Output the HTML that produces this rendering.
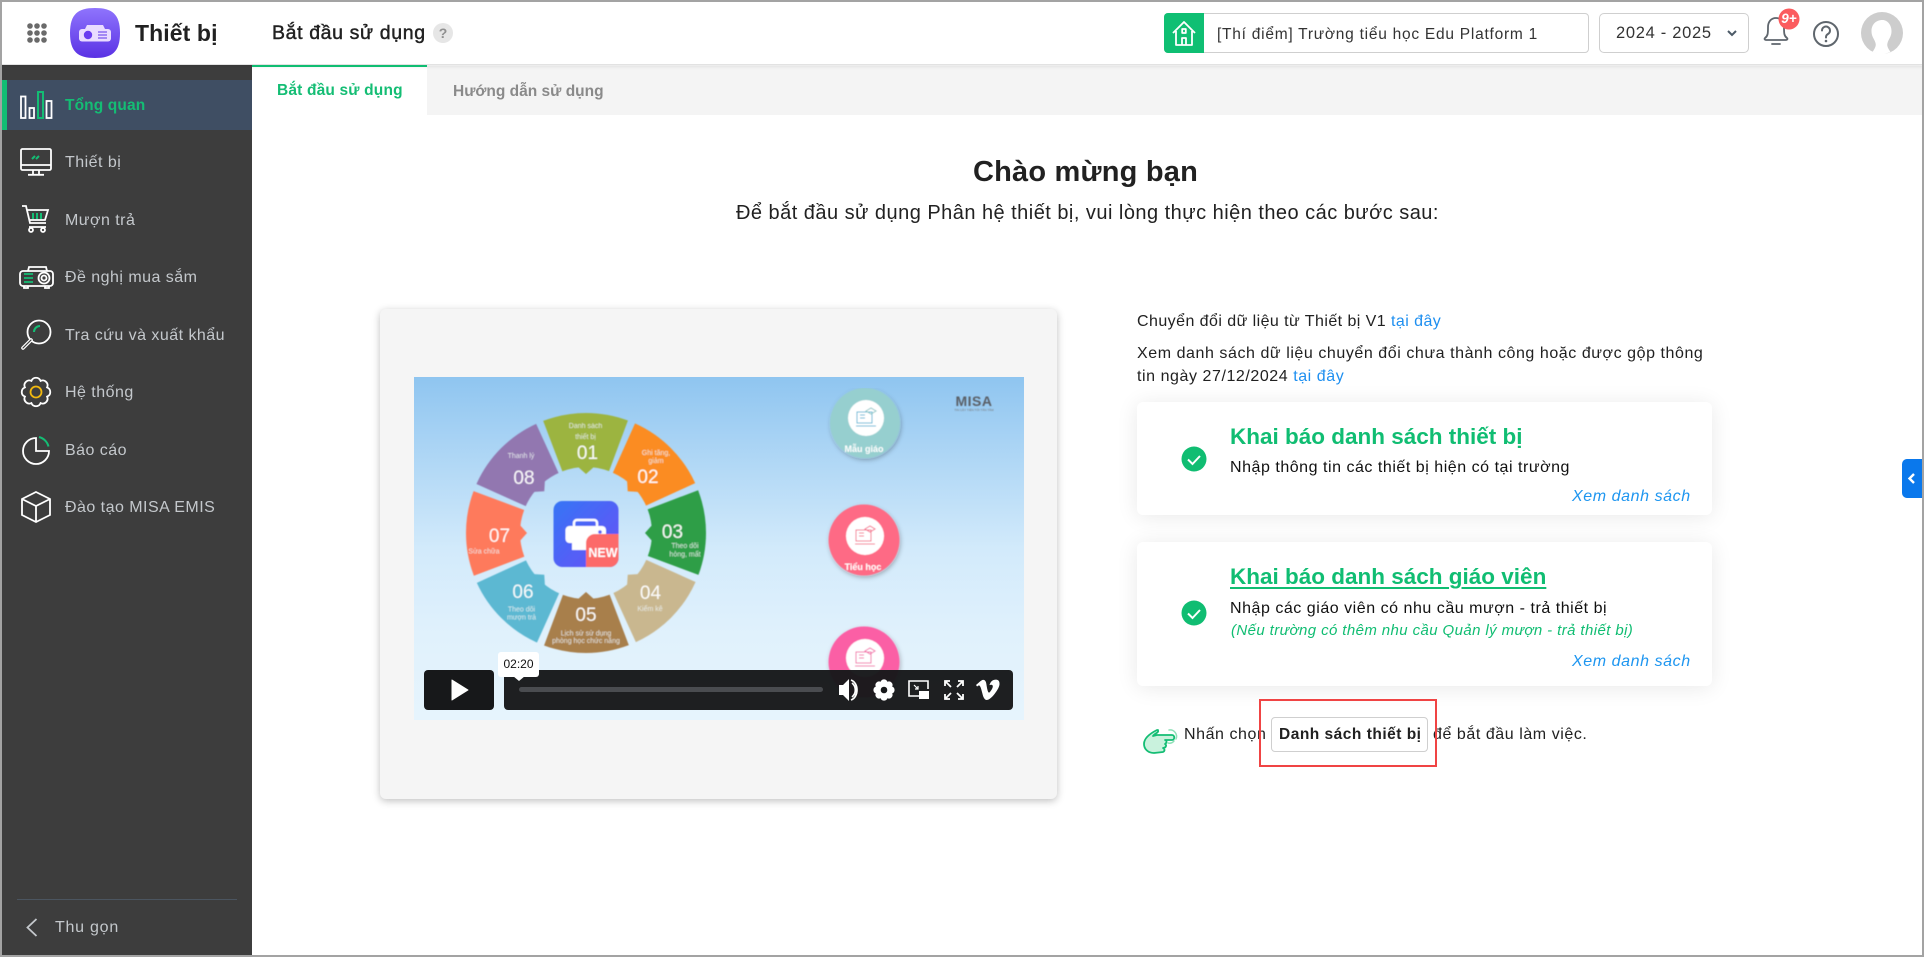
<!DOCTYPE html>
<html lang="vi">
<head>
<meta charset="utf-8">
<title>Thiết bị</title>
<style>
*{box-sizing:border-box}
html,body{margin:0;padding:0;width:1924px;height:957px;overflow:hidden;background:#fff}
body{font-family:"Liberation Sans","Noto Sans CJK SC",sans-serif;color:#212121;position:relative}
.a{position:absolute}
.t{position:absolute;white-space:nowrap;line-height:20px;height:20px}
svg{position:absolute;overflow:visible}
.m{left:65px;font-size:16px;color:#c4c8cc;letter-spacing:.47px}
.b{font-size:16px;color:#212121;letter-spacing:.56px}
.l{color:#1e8ff0}
.card{position:absolute;left:1137px;width:575px;background:#fff;border-radius:6px;box-shadow:0 2px 22px rgba(0,0,0,.09)}
.h{left:1230px;font-size:22.5px;font-weight:bold;color:#10bd72;line-height:28px;height:28px}
.x{left:1572px;font-size:16px;font-style:italic;color:#1e96f0;letter-spacing:.58px}
.d{left:1230px;font-size:16px;color:#111;letter-spacing:.53px}
</style>
</head>
<body>
<!-- header -->
<div class="a" style="left:0;top:0;width:1924px;height:65px;background:#fff;border-bottom:1px solid #e2e2e2;box-shadow:0 1px 4px rgba(0,0,0,.12);z-index:3"></div>
<svg style="left:0;top:0;z-index:4" width="1924" height="65">
  <g fill="#6a6a6a">
    <circle cx="30" cy="26" r="2.8"/><circle cx="37" cy="26" r="2.8"/><circle cx="44" cy="26" r="2.8"/>
    <circle cx="30" cy="33" r="2.8"/><circle cx="37" cy="33" r="2.8"/><circle cx="44" cy="33" r="2.8"/>
    <circle cx="30" cy="40" r="2.8"/><circle cx="37" cy="40" r="2.8"/><circle cx="44" cy="40" r="2.8"/>
  </g>
  <defs><linearGradient id="lg" x1="0" y1="0" x2="0" y2="1"><stop offset="0" stop-color="#8f74fd"/><stop offset="1" stop-color="#5a32e4"/></linearGradient>
  <linearGradient id="vbg" x1="0" y1="0" x2="0" y2="1"><stop offset="0" stop-color="#8fc5f0"/><stop offset=".5" stop-color="#d2eafb"/><stop offset=".75" stop-color="#e0f1fc"/><stop offset="1" stop-color="#e6f4fd"/></linearGradient>
  <linearGradient id="ic" x1="0" y1="0" x2="1" y2="1"><stop offset="0" stop-color="#3675f5"/><stop offset="1" stop-color="#6a4ff7"/></linearGradient>
  <filter id="sh" x="-30%" y="-30%" width="160%" height="160%"><feDropShadow dx="1" dy="2" stdDeviation="2.5" flood-color="#000" flood-opacity=".28"/></filter>
  <filter id="soft" x="0" y="0" width="100%" height="100%"><feGaussianBlur stdDeviation=".45"/></filter></defs>
  <path d="M95 8C112 8 120 14 120 33C120 52 112 58 95 58C78 58 70 52 70 33C70 14 78 8 95 8Z" fill="url(#lg)"/>
  <path d="M85 29l2-4h16l2 4Z" fill="#e9dcff"/>
  <rect x="79" y="29" width="32" height="12.500" rx="3" fill="#e9dcff"/>
  <circle cx="88" cy="35" r="4.200" fill="#6a3df0"/>
  <path d="M98 32h9M98 35h9M98 38h9" stroke="#7a55ee" stroke-width="1.300"/>
  <circle cx="443" cy="33" r="10" fill="#e6e6e6"/>
  <!-- bell -->
  <g fill="none" stroke="#5f666d" stroke-width="1.800" stroke-linecap="round" stroke-linejoin="round">
    <path d="M1765 38c3-2 3-5 3-11 0-5 3-9 8-9s8 4 8 9c0 6 0 9 3 11 1 1 0 2-1 2h-20c-1 0-2-1-1-2Z"/>
    <path d="M1772 44h8"/>
  </g>
  <circle cx="1789" cy="19" r="10.500" fill="#fb5c5f"/>
  <circle cx="1826" cy="34" r="12" fill="none" stroke="#5f666d" stroke-width="2"/>
  <path d="M1822 30.500a4 4 0 1 1 6 3.500c-1.500 1-2 1.500-2 3.500" fill="none" stroke="#5f666d" stroke-width="2" stroke-linecap="round"/>
  <circle cx="1826" cy="41" r="1.300" fill="#5f666d"/>
  <!-- avatar -->
  <circle cx="1882" cy="33" r="21" fill="#cdcdcd"/>
  <path d="M1882.500 20c-7 0-11 5-11 11 0 6 3 8 4 12 1 3-1 6-3 9l9 3 9-3c-2-3-4-6-3-9 1-4 4-6 4-12 0-6-4-11-9-11Z" fill="#fff"/>
  <!-- chevron -->
  <path d="M1728 31l4 4 4-4" fill="none" stroke="#4c5a67" stroke-width="2"/>
</svg>
<div class="t" style="left:135px;top:21px;font-size:23px;line-height:24px;height:24px;font-weight:bold;color:#212121;z-index:5;letter-spacing:.1px">Thiết bị</div>
<div class="t" style="left:272px;top:22px;font-size:19.5px;line-height:22px;height:22px;color:#212121;z-index:5;letter-spacing:.63px;-webkit-text-stroke:.45px #212121">Bắt đầu sử dụng</div>
<div class="t" style="left:437px;top:23px;width:12px;text-align:center;font-size:14px;font-weight:bold;color:#8f8f8f;z-index:5">?</div>
<div class="a" style="left:1164px;top:13px;width:425px;height:40px;border:1px solid #cfcfcf;border-radius:4px;background:#fff;z-index:5"></div>
<div class="a" style="left:1164px;top:13px;width:40px;height:40px;background:#0fbf73;border-radius:4px 0 0 4px;z-index:5"></div>
<svg style="left:1164px;top:13px;z-index:6" width="40" height="40" fill="none" stroke="#fff" stroke-width="1.800" stroke-linejoin="round">
  <path d="M9 20L20 9l11 11M12 18v14h16V18M18 32v-7h4v7"/><rect x="18.200" y="16" width="3.600" height="4"/>
</svg>
<div class="t" style="left:1217px;top:25px;font-size:15.5px;color:#333;z-index:6;letter-spacing:.75px">[Thí điểm] Trường tiểu học Edu Platform 1</div>
<div class="a" style="left:1599px;top:13px;width:150px;height:40px;border:1px solid #cfcfcf;border-radius:5px;background:transparent;z-index:5"></div>
<div class="t" style="left:1616px;top:23px;font-size:16.5px;color:#333;z-index:6;letter-spacing:.7px">2024 - 2025</div>
<div class="t" style="left:1780px;top:9px;width:18px;text-align:center;font-size:13.5px;font-weight:bold;font-style:italic;color:#fff;z-index:6">9+</div>

<!-- sidebar -->
<div class="a" style="left:0;top:65px;width:252px;height:892px;background:#3d3d3d"></div>
<div class="a" style="left:2px;top:80px;width:250px;height:50px;background:#3f4e63"></div>
<div class="a" style="left:2px;top:80px;width:5px;height:50px;background:#12bd74"></div>
<div class="t m" style="top:96px;color:#14bd74;font-weight:bold;font-size:15.5px;letter-spacing:.12px">Tổng quan</div>
<div class="t m" style="top:153px">Thiết bị</div>
<div class="t m" style="top:211px">Mượn trả</div>
<div class="t m" style="top:268px">Đề nghị mua sắm</div>
<div class="t m" style="top:326px">Tra cứu và xuất khẩu</div>
<div class="t m" style="top:383px">Hệ thống</div>
<div class="t m" style="top:441px">Báo cáo</div>
<div class="t m" style="top:498px">Đào tạo MISA EMIS</div>
<div class="t m" style="left:55px;top:918px;letter-spacing:.75px">Thu gọn</div>
<div class="a" style="left:17px;top:899px;width:220px;height:1px;background:#4b5560"></div>
<svg style="left:0;top:0" width="252" height="957" fill="none" stroke="#fff" stroke-width="1.800">
  <!-- overview -->
  <rect x="21" y="96.500" width="4.500" height="21.500"/><rect x="29.500" y="108" width="4.500" height="10"/>
  <rect x="38" y="92" width="5" height="26" stroke="#14bd74" stroke-width="2"/><rect x="46.500" y="101" width="5" height="17"/>
  <!-- monitor -->
  <rect x="21" y="149" width="30" height="21" rx="1.500"/><path d="M21 165h30M33 170v4.500M39 170v4.500M28 174.800h16"/>
  <path d="M32 159l3-3M36 159l3-3" stroke="#14bd74" stroke-width="2"/>
  <!-- cart -->
  <path d="M22 206h4l4 17h16M27 210h21l-3 10H29.500M29 227h17"/><circle cx="31" cy="230" r="2"/><circle cx="43" cy="230" r="2"/>
  <path d="M33 213v6M37 213v6M41 213v6" stroke="#14bd74" stroke-width="2"/>
  <!-- projector -->
  <rect x="20" y="271" width="33" height="15" rx="3"/><path d="M28 271l1-4h17l1 4M24 286v2h4v-2M45 286v2h4v-2"/>
  <circle cx="44" cy="278" r="5.500"/><circle cx="44" cy="278" r="2.500"/>
  <path d="M24 274h9M24 278h9M24 282h9" stroke="#14bd74"/>
  <!-- search -->
  <circle cx="39" cy="332" r="11.500"/><path d="M31 340l-8 8" stroke-width="3.600" stroke-linecap="round"/><path d="M31 340l-8 8" stroke="#3d3d3d" stroke-width="1.200" stroke-linecap="round"/>
  <path d="M34 332a6 6 0 0 1 6-6" stroke="#14bd74" stroke-width="2"/>
  <!-- gear -->
  <path transform="translate(36 392)" d="M4.590-11.090A4.900 4.900 0 0 1 11.090-4.590A4.900 4.900 0 0 1 11.090 4.590A4.900 4.900 0 0 1 4.590 11.090A4.900 4.900 0 0 1-4.590 11.090A4.900 4.900 0 0 1-11.090 4.590A4.900 4.900 0 0 1-11.090-4.590A4.900 4.900 0 0 1-4.590-11.090A4.900 4.900 0 0 1 4.590-11.090Z"/>
  <circle cx="36" cy="392" r="5.500" stroke="#f2b90f" stroke-width="1.800"/>
  <!-- pie -->
  <path d="M36 438a13 13 0 1 0 13 13H36Z"/><path d="M39 437a13 13 0 0 1 9.500 9.500" stroke="#14bd74" stroke-width="2"/>
  <!-- cube -->
  <path d="M36 492l14 7v16l-14 7-14-7v-16ZM22 499l14 7 14-7M36 506v16"/>
  <!-- chevron -->
  <path d="M36.500 919l-9 8.500 9 8.500" stroke="#c4c8cc"/>
</svg>

<!-- tabs -->
<div class="a" style="left:427px;top:66px;width:1497px;height:49px;background:#f4f4f4"></div>
<div class="a" style="left:252px;top:65px;width:175px;height:2px;background:#0fbd72;z-index:4"></div>
<div class="t" style="left:277px;top:81px;font-size:15.5px;font-weight:bold;color:#14bd74;letter-spacing:.17px">Bắt đầu sử dụng</div>
<div class="t" style="left:453px;top:82px;font-size:15.5px;font-weight:bold;color:#8a8a8a">Hướng dẫn sử dụng</div>

<!-- title -->
<div class="t" style="left:973px;top:156px;font-size:29px;line-height:32px;height:32px;font-weight:bold;color:#212121;letter-spacing:.2px">Chào mừng bạn</div>
<div class="t" style="left:736px;top:201px;font-size:20px;line-height:24px;height:24px;color:#212121;letter-spacing:.47px">Để bắt đầu sử dụng Phân hệ thiết bị, vui lòng thực hiện theo các bước sau:</div>

<!-- video card -->
<div class="a" style="left:380px;top:309px;width:677px;height:490px;background:#f5f5f5;border-radius:6px;box-shadow:0 2px 8px rgba(0,0,0,.25)"></div>
<svg style="left:414px;top:377px" width="610" height="343" viewBox="414 377 610 343" font-family="Liberation Sans, sans-serif">
  <rect x="414" y="377" width="610" height="343" fill="url(#vbg)"/>
  <g filter="url(#soft)">
  <g transform="translate(586 533)" fill="none" stroke-width="54">
    <circle r="93" pathLength="360" stroke-dasharray="41 319" stroke="#9cb440" transform="rotate(-110.500)"/>
    <circle r="93" pathLength="360" stroke-dasharray="41 319" stroke="#fb8c20" transform="rotate(-65.500)"/>
    <circle r="93" pathLength="360" stroke-dasharray="41 319" stroke="#2f9e47" transform="rotate(-20.500)"/>
    <circle r="93" pathLength="360" stroke-dasharray="41 319" stroke="#c9b78f" transform="rotate(24.500)"/>
    <circle r="93" pathLength="360" stroke-dasharray="41 319" stroke="#a87f4c" transform="rotate(69.500)"/>
    <circle r="93" pathLength="360" stroke-dasharray="41 319" stroke="#5bb8d2" transform="rotate(114.500)"/>
    <circle r="93" pathLength="360" stroke-dasharray="41 319" stroke="#fe7a5c" transform="rotate(159.500)"/>
    <circle r="93" pathLength="360" stroke-dasharray="41 319" stroke="#9277b0" transform="rotate(204.500)"/>
    <g stroke="none">
      <polygon points="-9,-67 9,-67 0,-59" fill="#9cb440"/>
      <polygon points="-9,-67 9,-67 0,-59" fill="#fb8c20" transform="rotate(45)"/>
      <polygon points="-9,-67 9,-67 0,-59" fill="#2f9e47" transform="rotate(90)"/>
      <polygon points="-9,-67 9,-67 0,-59" fill="#c9b78f" transform="rotate(135)"/>
      <polygon points="-9,-67 9,-67 0,-59" fill="#a87f4c" transform="rotate(180)"/>
      <polygon points="-9,-67 9,-67 0,-59" fill="#5bb8d2" transform="rotate(225)"/>
      <polygon points="-9,-67 9,-67 0,-59" fill="#fe7a5c" transform="rotate(270)"/>
      <polygon points="-9,-67 9,-67 0,-59" fill="#9277b0" transform="rotate(315)"/>
    </g>
  </g>
  <g fill="#fff" text-anchor="middle" font-size="19" opacity=".95">
    <text x="587.500" y="459">01</text><text x="648" y="483">02</text><text x="672.500" y="538">03</text><text x="650.500" y="599">04</text>
    <text x="586" y="621">05</text><text x="523" y="598">06</text><text x="499.500" y="542">07</text><text x="524" y="484">08</text>
  </g>
  <g fill="#eef4f4" text-anchor="middle" font-size="7" opacity=".85">
    <text x="585.500" y="428">Danh sách</text><text x="585.500" y="439">thiết bị</text>
    <text x="656" y="455">Ghi tăng,</text><text x="656" y="463">giảm</text>
    <text x="685" y="548">Theo dõi</text><text x="685" y="556.500">hỏng, mất</text>
    <text x="650" y="611">Kiểm kê</text>
    <text x="586" y="635.500">Lịch sử sử dụng</text><text x="586" y="643">phòng học chức năng</text>
    <text x="521.500" y="611.500">Theo dõi</text><text x="521.500" y="619.500">mượn trả</text>
    <text x="484" y="553.500">Sửa chữa</text><text x="521" y="458">Thanh lý</text>
  </g>
  <rect x="553.500" y="501" width="65" height="66" rx="9" fill="url(#ic)"/>
  <rect x="574" y="520" width="23" height="9" rx="3" fill="none" stroke="#fff" stroke-width="2.500"/>
  <rect x="565.500" y="526" width="40.500" height="17" rx="4" fill="#fff"/>
  <rect x="572" y="541" width="24" height="9" fill="#fff"/>
  <circle cx="600" cy="532" r="1.800" fill="#5a5ff5"/>
  <path d="M586 567v-24a9 9 0 0 1 9-9h23.500v24a9 9 0 0 1-9 9Z" fill="#fc6a69"/>
  <text x="603" y="557" fill="#fff" font-size="12.500" font-weight="bold" text-anchor="middle">NEW</text>
  <!-- circles -->
  <circle cx="865" cy="423" r="35" fill="#96cfcf" filter="url(#sh)"/><circle cx="866" cy="418" r="18" fill="#fff"/>
  <text x="864" y="452" fill="#fff" font-size="9" font-weight="bold" text-anchor="middle">Mẫu giáo</text>
  <g fill="none" stroke="#55b9d8" stroke-width="1"><rect x="857" y="412" width="15" height="11"/><path d="M856 426h20M860 415h5M860 418h5"/><path d="M866 411l5-3 5 3-5 3Z" stroke="#8fc7c7"/></g>
  <circle cx="864" cy="540" r="35.500" fill="#fe6b85" filter="url(#sh)"/><circle cx="865" cy="536" r="19" fill="#fff"/>
  <text x="863" y="570" fill="#fff" font-size="9" font-weight="bold" text-anchor="middle">Tiểu học</text>
  <g fill="none" stroke="#f4708c" stroke-width="1"><rect x="856" y="530" width="15" height="11"/><path d="M855 544h20M859 533h5M859 536h5"/><path d="M865 529l5-3 5 3-5 3Z"/></g>
  <circle cx="864" cy="662" r="35.500" fill="#fb5fa5" filter="url(#sh)"/><circle cx="865" cy="658" r="19" fill="#fff"/>
  <g fill="none" stroke="#f26eaa" stroke-width="1"><rect x="856" y="652" width="15" height="11"/><path d="M855 666h20M859 655h5M859 658h5"/><path d="M865 651l5-3 5 3-5 3Z"/></g>
  <text x="974" y="406" fill="#5a5f66" font-size="14" font-weight="bold" text-anchor="middle" letter-spacing=".5">MISA</text>
  <text x="974" y="411" fill="#777" font-size="3" text-anchor="middle">TIN CẬY TIÊN TỚI TÂN TÂM</text>
  </g>
</svg>
<!-- video controls -->
<div class="a" style="left:424px;top:670px;width:70px;height:40px;background:#17181a;border-radius:4px"></div>
<div class="a" style="left:504px;top:670px;width:509px;height:40px;background:rgba(23,24,26,.97);border-radius:4px"></div>
<div class="a" style="left:519px;top:687px;width:304px;height:5px;background:#4a4c50;border-radius:3px"></div>
<svg style="left:0;top:0;width:1px;height:1px">
  <path d="M452 680l16 10-16 10Z" fill="#fff" stroke="#fff" stroke-linejoin="round"/>
  <path d="M513 676h12l-6 5Z" fill="#fff"/>
  <!-- volume -->
  <path d="M839 685h4l6-6v22l-6-6h-4Z" fill="#fff"/>
  <path d="M852 683a9 9 0 0 1 0 14M851 680c8 3 8 17 0 20" fill="none" stroke="#fff" stroke-width="1.700"/>
  <!-- gear -->
  <path transform="translate(884 690) scale(.74)" d="M4.590-11.090A4.900 4.900 0 0 1 11.090-4.590A4.900 4.900 0 0 1 11.090 4.590A4.900 4.900 0 0 1 4.590 11.090A4.900 4.900 0 0 1-4.590 11.090A4.900 4.900 0 0 1-11.090 4.590A4.900 4.900 0 0 1-11.090-4.590A4.900 4.900 0 0 1-4.590-11.090A4.900 4.900 0 0 1 4.590-11.090Z" fill="#fff"/>
  <circle cx="884" cy="690" r="3.300" fill="#17181a"/>
  <!-- pip -->
  <path d="M920 696h-11v-15h19v8" fill="none" stroke="#fff" stroke-width="1.600"/>
  <rect x="919" y="691" width="10" height="8" fill="#fff"/>
  <path d="M914 685l4 4M918 686v3h-3" fill="none" stroke="#fff" stroke-width="1.200"/>
  <!-- fullscreen -->
  <g fill="none" stroke="#fff" stroke-width="1.800">
    <path d="M945 686v-5h5M946 682l5 5M963 686v-5h-5M962 682l-5 5M945 694v5h5M946 698l5-5M963 694v5h-5M962 698l-5-5"/>
  </g>
  <!-- vimeo -->
  <path transform="translate(976 678) scale(.98)" d="M23.977 6.416c-.105 2.338-1.739 5.543-4.894 9.609-3.268 4.247-6.026 6.37-8.29 6.37-1.409 0-2.578-1.294-3.553-3.881L5.322 11.4C4.603 8.816 3.834 7.522 3.01 7.522c-.179 0-.806.378-1.881 1.132L0 7.197c1.185-1.044 2.351-2.084 3.501-3.128C5.08 2.701 6.266 1.984 7.055 1.91c1.867-.18 3.016 1.1 3.447 3.838.465 2.953.789 4.789.971 5.507.539 2.45 1.131 3.674 1.776 3.674.502 0 1.256-.796 2.265-2.385 1.004-1.589 1.54-2.797 1.612-3.628.144-1.371-.395-2.061-1.614-2.061-.574 0-1.167.121-1.777.391 1.186-3.868 3.434-5.757 6.762-5.637 2.473.06 3.628 1.664 3.493 4.797z" fill="#fff"/>
</svg>
<div class="a" style="left:498px;top:652px;width:41px;height:25px;background:#fff;border-radius:3px;color:#111;font-size:12px;line-height:25px;text-align:center">02:20</div>

<!-- right column -->
<div class="t b" style="left:1137px;top:312px;letter-spacing:.44px">Chuyển đổi dữ liệu từ Thiết bị V1 <span class="l">tại đây</span></div>
<div class="t b" style="left:1137px;top:344px">Xem danh sách dữ liệu chuyển đổi chưa thành công hoặc được gộp thông</div>
<div class="t b" style="left:1137px;top:367px">tin ngày 27/12/2024 <span class="l">tại đây</span></div>

<div class="card" style="top:402px;height:113px"></div>
<div class="card" style="top:542px;height:144px"></div>
<svg style="left:0;top:0;width:1px;height:1px">
  <circle cx="1194" cy="459" r="12.500" fill="#10bd72"/><path d="M1188 459.500l4.500 4.500 7.500-8" fill="none" stroke="#fff" stroke-width="2"/>
  <circle cx="1194" cy="613" r="12.500" fill="#10bd72"/><path d="M1188 613.500l4.500 4.500 7.500-8" fill="none" stroke="#fff" stroke-width="2"/>
  <!-- hand -->
  <path d="M1157 730C1151 733 1144 738 1144 744C1144 749 1148 753 1154 753L1163 752C1165 751 1165 749 1163 748C1166 748 1167 745 1165 744C1167 743 1167 740 1165 740L1172 740C1175 740 1175 735 1172 735L1157 735L1153 736C1155 733 1159 733 1158 730Z" fill="#c9f2dd" stroke="#14bd74" stroke-width="1.800" stroke-linejoin="round"/>
  <path d="M1169 730a6.500 6.500 0 0 1 7 9M1168 743a6 6 0 0 0 6-2" fill="none" stroke="#8fe0b8" stroke-width="1.500" stroke-linecap="round"/>
</svg>
<div class="t h" style="top:423px">Khai báo danh sách thiết bị</div>
<div class="t d" style="top:458px">Nhập thông tin các thiết bị hiện có tại trường</div>
<div class="t x" style="top:487px">Xem danh sách</div>
<div class="t h" style="top:563px;text-decoration:underline;text-underline-offset:3px">Khai báo danh sách giáo viên</div>
<div class="t d" style="top:599px">Nhập các giáo viên có nhu cầu mượn - trả thiết bị</div>
<div class="t" style="left:1231px;top:621px;font-size:15px;font-style:italic;color:#10bd72;letter-spacing:.4px">(Nếu trường có thêm nhu cầu Quản lý mượn - trả thiết bị)</div>
<div class="t x" style="top:652px">Xem danh sách</div>

<div class="t b" style="left:1184px;top:725px">Nhấn chọn</div>
<div class="a" style="left:1271px;top:717px;width:157px;height:35px;border:1px solid #cfcfcf;border-radius:4px;background:#fff"></div>
<div class="t" style="left:1279px;top:725px;font-size:15.5px;font-weight:bold;color:#212121;letter-spacing:.5px">Danh sách thiết bị</div>
<div class="t b" style="left:1433px;top:725px">để bắt đầu làm việc.</div>
<div class="a" style="left:1259px;top:699px;width:178px;height:68px;border:2px solid #f04444"></div>

<!-- side handle -->
<div class="a" style="left:1902px;top:459px;width:20px;height:39px;background:#0a78ec;border-radius:5px 0 0 5px"></div>
<svg style="left:0;top:0;width:1px;height:1px"><path d="M1914 474l-4.500 4.500 4.500 4.500" fill="none" stroke="#fff" stroke-width="2.400"/></svg>

<!-- outer frame -->
<div class="a" style="left:0;top:0;width:1924px;height:957px;border:2px solid #a3a3a3;z-index:9;pointer-events:none"></div>
</body>
</html>
